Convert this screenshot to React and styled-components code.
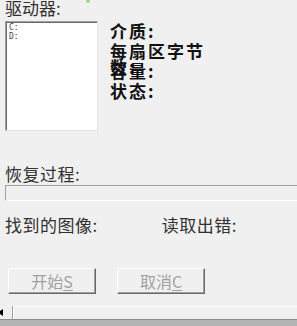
import React from 'react';
import styled, { createGlobalStyle } from 'styled-components';

const Global = createGlobalStyle`
    html, body {
        margin: 0;
        padding: 0;
        background: #f0f0f0;
    }
    body {
        font-family: "Noto Sans CJK SC", "Noto Sans", sans-serif;
    }
`;

const Dialog = styled.div`
    position: relative;
    width: 297px;
    height: 326px;
    overflow: hidden;
    background: #f0f0f0;
    display: flex;
    flex-direction: column;
`;

const Label = styled.div`
    font-size: 17px;
    line-height: 17px;
    height: 17px;
    color: #303030;
    letter-spacing: ${props => props.spacing || '0'};
    white-space: nowrap;
    margin-top: ${props => props.top || '0'};
    margin-left: ${props => props.left || '5px'};
`;

const Header = styled(Label)`
    height: 22px;
    margin-top: -1px;
`;

const Spark = styled.span`
    position: absolute;
    left: 86px;
    top: -2px;
    width: 4px;
    height: 5px;
    border-radius: 2px;
    background: #9fd88f;
`;

const MainRow = styled.div`
    display: flex;
    height: 110px;
    padding-left: 5px;
`;

const ListBox = styled.div`
    width: 88px;
    height: 107px;
    background: #fff;
    border: 1px solid;
    border-color: #a0a0a0 #e3e3e3 #e3e3e3 #a0a0a0;
    box-shadow: inset 1px 1px 0 #696969;
    padding: 1px 0 0 3px;
    box-sizing: content-box;
    display: flex;
    flex-direction: column;
`;

const DriveItem = styled.div`
    font-family: "DejaVu Sans Mono", monospace;
    font-size: 8px;
    line-height: 9px;
    color: #444;
`;

const Info = styled.div`
    margin-left: 12px;
    padding-top: 2px;
    display: grid;
    grid-template-rows: repeat(4, 20px);
    width: 100px;
`;

const InfoLabel = styled.div`
    font-size: 17px;
    font-weight: bold;
    line-height: 16px;
    letter-spacing: 2px;
    color: #111;
    overflow: visible;
    word-break: break-all;
`;

const Bar = styled.div`
    margin: 3px -20px 0 5px;
    height: 14px;
    border: 1px solid;
    border-color: #a0a0a0 #a0a0a0 #fff #a0a0a0;
    background: #f0f0f0;
`;

const FoundRow = styled.div`
    display: flex;
    margin-top: 15px;
`;

const Buttons = styled.div`
    display: flex;
    gap: 21px;
    padding-left: 8px;
    margin-top: 35px;
`;

const Button = styled.button`
    width: 88px;
    height: 26px;
    padding: 0;
    background: #f0f0f0;
    border: 1px solid;
    border-color: #fff #696969 #696969 #fff;
    box-shadow: inset -1px -1px 0 #a0a0a0;
    font-family: "Noto Sans CJK SC", "Noto Sans", sans-serif;
    font-size: 16px;
    line-height: 20px;
    color: #a0a0a0;
    u {
        text-decoration-thickness: 1px;
        text-underline-offset: 2px;
    }
`;

const ScrollBar = styled.div`
    display: flex;
    margin-top: 12px;
    height: 13px;
`;

const ArrowBtn = styled.div`
    width: 12px;
    height: 13px;
    border-right: 1px solid #a0a0a0;
    box-shadow: 1px 0 0 #fff;
    display: flex;
    align-items: center;
    svg {
        margin-left: -2px;
    }
`;

const Track = styled.div`
    flex: 1;
    margin-left: 1px;
    border-top: 1px solid #fff;
`;

const StatusBand = styled.div`
    height: 6px;
    flex-shrink: 0;
    border-top: 1px solid #8c8c8c;
    background: #b4b4b4;
`;

const App = () => {
    return (
        <Dialog>
            <Global />
            <Spark />
            <Header>驱动器:</Header>
            <MainRow>
                <ListBox>
                    <DriveItem>C:</DriveItem>
                    <DriveItem>D:</DriveItem>
                </ListBox>
                <Info>
                    <InfoLabel>介质:</InfoLabel>
                    <InfoLabel>每扇区字节数:</InfoLabel>
                    <InfoLabel>容量:</InfoLabel>
                    <InfoLabel>状态:</InfoLabel>
                </Info>
            </MainRow>
            <Label top="34px" spacing="0.5px">恢复过程:</Label>
            <Bar />
            <FoundRow>
                <Label spacing="0.5px">找到的图像:</Label>
                <Label left="64px" spacing="0.5px">读取出错:</Label>
            </FoundRow>
            <Buttons>
                <Button disabled>开始<u>S</u></Button>
                <Button disabled>取消<u>C</u></Button>
            </Buttons>
            <ScrollBar>
                <ArrowBtn>
                    <svg width="6" height="7" viewBox="0 0 6 7">
                        <path d="M5 0 L0 3.5 L5 7 Z" fill="#000" />
                    </svg>
                </ArrowBtn>
                <Track />
            </ScrollBar>
            <StatusBand />
        </Dialog>
    );
};

export default App;
